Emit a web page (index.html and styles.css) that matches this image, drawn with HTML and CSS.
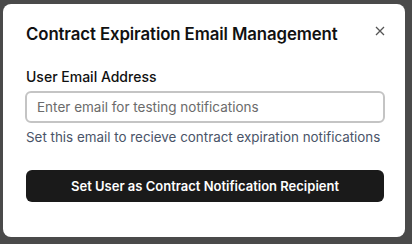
FILE: index.html
```html
<!DOCTYPE html>
<html>
<head>
<meta charset="utf-8">
<link rel="stylesheet" href="styles.css">
</head>
<body>
<div class="modal">
  <div class="header">
    <h2 class="title">Contract Expiration Email Management</h2>
    <button class="close" aria-label="Close">
      <svg width="10" height="10" viewBox="0 0 10 10"><path d="M1 1L9 9M9 1L1 9" stroke="#555" stroke-width="1.3" fill="none"/></svg>
    </button>
  </div>
  <label class="label">User Email Address</label>
  <input class="input" type="email" placeholder="Enter email for testing notifications">
  <p class="help">Set this email to recieve contract expiration notifications</p>
  <button class="primary">Set User as Contract Notification Recipient</button>
</div>
</body>
</html>
```
FILE: styles.css
```css
html, body {
  margin: 0;
  height: 100%;
}
body {
  background: #4a4a4a;
  padding: 4px 7px 7px 3px;
  box-sizing: border-box;
  font-family: "Inter", "Liberation Sans", sans-serif;
}
.modal {
  background: #fff;
  border-radius: 8px;
  height: 100%;
  box-sizing: border-box;
  padding: 18px 21px 0 23px;
  display: flex;
  flex-direction: column;
}
.header {
  display: flex;
  justify-content: space-between;
  align-items: flex-start;
}
.title {
  margin: 0;
  font-size: 16.8px;
  line-height: 24px;
  font-weight: 600;
  color: #111;
  letter-spacing: -0.1px;
}
.close {
  border: 0;
  background: none;
  padding: 0;
  margin: 3px -2px 0 0;
  width: 12px;
  height: 12px;
  display: flex;
  align-items: center;
  justify-content: center;
}
.label {
  margin-top: 21px;
  font-size: 14px;
  line-height: 20px;
  font-weight: 500;
  color: #111;
}
.input {
  margin-top: 4px;
  height: 32px;
  box-sizing: border-box;
  border: 2px solid #c4c4c4;
  border-radius: 6px;
  padding: 0 10px;
  font: inherit;
  font-size: 13.5px;
  width: 360px;
  margin-left: -1px;
  outline: none;
}
.input::placeholder {
  color: #6b6b6b;
}
.help {
  margin: 4px 0 0;
  font-size: 13.4px;
  line-height: 20px;
  color: #4a5468;
}
.primary {
  margin-top: 23px;
  height: 32px;
  width: 358px;
  border: 0;
  border-radius: 6px;
  background: #1a1a1a;
  color: #fff;
  font: inherit;
  font-size: 13px;
  font-weight: 600;
}
```
